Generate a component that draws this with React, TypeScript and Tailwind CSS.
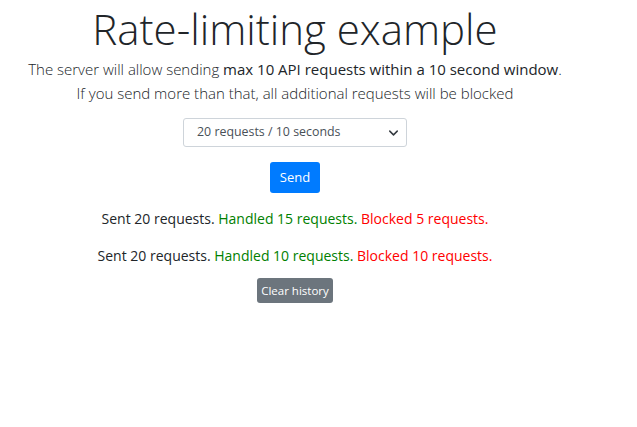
import { useState } from "react";

const history = [
  { sent: 20, handled: 15, blocked: 5 },
  { sent: 20, handled: 10, blocked: 10 },
];

function ChevronDown() {
  return (
    <svg
      width="13"
      height="10"
      viewBox="0 0 16 16"
      className="pointer-events-none absolute right-[7px] top-1/2 -translate-y-1/2"
    >
      <path fill="none" stroke="#343a40" strokeLinecap="round" strokeLinejoin="round" strokeWidth="2.4" d="m2 5 6 6 6-6" />
    </svg>
  );
}

export default function App() {
  const [choice, setChoice] = useState("20");

  return (
    <div className="min-h-screen bg-white font-['Open_Sans',sans-serif] text-[#212529]">
      <div className="flex w-[590px] flex-col items-center text-center">
        <h1 className="mt-[1px] text-[42px] font-light leading-[56px]">Rate-limiting example</h1>
        <p className="text-[15px] font-light leading-[24px]">
          The server will allow sending <b className="font-normal">max 10 API requests within a 10 second window</b>.
          <br />
          If you send more than that, all additional requests will be blocked
        </p>

        <div className="relative mt-[13px] w-[224px]">
          <select
            value={choice}
            onChange={(e) => setChoice(e.target.value)}
            className="h-[29px] w-full appearance-none rounded-[3px] border border-[#ced4da] bg-white pl-[13px] pr-6 text-[12.4px] text-[#495057]"
          >
            <option value="10">10 requests / 10 seconds</option>
            <option value="20">20 requests / 10 seconds</option>
            <option value="30">30 requests / 10 seconds</option>
          </select>
          <ChevronDown />
        </div>

        <button className="mt-[15px] h-[31px] w-[50px] rounded-[3px] bg-[#007bff] text-[13px] text-white">
          Send
        </button>

        <div className="mt-[15px] flex flex-col gap-[16px] text-[14px] leading-[21px]">
          {history.map((h, i) => (
            <p key={i}>
              Sent {h.sent} requests.{" "}
              <span className="text-[#008000]">Handled {h.handled} requests.</span>{" "}
              <span className="text-[#ff0000]">Blocked {h.blocked} requests.</span>
            </p>
          ))}
        </div>

        <button className="mt-[12px] h-[25px] w-[76px] rounded-[3px] bg-[#6c757d] text-[11.5px] text-white">
          Clear history
        </button>
      </div>
    </div>
  );
}
